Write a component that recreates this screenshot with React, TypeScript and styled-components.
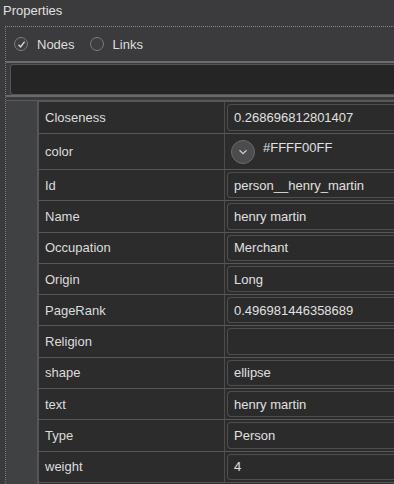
import styled, { createGlobalStyle } from 'styled-components'

const GlobalStyle = createGlobalStyle`
  html, body {
    margin: 0;
    padding: 0;
    background: #3b3b3d;
    font-family: "Liberation Sans", Arial, sans-serif;
  }
`

const Panel = styled.div`
  width: 394px;
  height: 484px;
  overflow: hidden;
  background: #3b3b3d;
  color: #dcdcdc;
  font-size: 13px;
  display: flex;
  flex-direction: column;
`

const TitleBar = styled.div`
  height: 26px;
  flex: none;
  padding-left: 3px;
  line-height: 22px;
  color: #e0e0e0;
`

const Body = styled.div`
  flex: 1;
  margin-left: 5px;
  border-top: 1px dotted #8a8a8a;
  border-left: 1px dotted #7a7a7a;
  display: flex;
  flex-direction: column;
  min-height: 0;
`

const RadioRow = styled.div`
  height: 34px;
  flex: none;
  display: flex;
  align-items: center;
  padding-left: 8px;
  gap: 9px;
`

const RadioLabel = styled.label`
  display: flex;
  align-items: center;
  gap: 9px;
  margin-right: 6px;
  color: #dedede;
`

const RadioDot = styled.span`
  width: 12px;
  height: 12px;
  border-radius: 50%;
  border: 1px solid #7c7c7c;
  background: #3e3e40;
  display: grid;
  place-content: center;
`

const FilterBar = styled.div`
  flex: none;
  border-top: 2px solid #6c6c6c;
  padding: 1px 0 0 4px;
  background: #3b3b3d;
`

const FilterInput = styled.div`
  height: 29px;
  border: 1px solid #555;
  border-right: none;
  border-radius: 3px 0 0 3px;
  background: #252525;
`

const Divider = styled.div`
  height: 3px;
  flex: none;
  border-top: 2px solid #6a6a6a;
  border-bottom: 1px solid #5a5a5a;
  background: #3b3b3d;
`

const Table = styled.div`
  flex: 1;
  display: flex;
  min-height: 0;
`

const Gutter = styled.div`
  width: 31px;
  flex: none;
  background: #404143;
  border-right: 2px solid #555657;
`

const Rows = styled.div`
  flex: 1;
  display: flex;
  flex-direction: column;
  background: #2c2c2c;
`

const Row = styled.div<{ $h: number }>`
  height: ${p => p.$h}px;
  flex: none;
  display: grid;
  grid-template-columns: 186px 1fr;
  border-top: 1px solid #575757;
  box-sizing: border-box;
`

const EndRow = styled.div`
  flex: 1;
  border-top: 1px solid #575757;
`

const NameCell = styled.div`
  display: flex;
  align-items: center;
  padding-left: 6px;
  border-right: 1px solid #4c4c4c;
  color: #dcdcdc;
`

const ValueCell = styled.div`
  padding: 2px 0 2px 2px;
  display: flex;
`

const ValueBox = styled.div`
  flex: 1;
  display: flex;
  align-items: center;
  padding-left: 6px;
  border: 1px solid #4e4e4e;
  border-right: none;
  border-radius: 4px 0 0 4px;
  background: #2b2b2b;
  color: #e0e0e0;
  white-space: nowrap;
`

const ColorValue = styled.div`
  flex: 1;
  display: flex;
  align-items: center;
  gap: 8px;
  padding-left: 4px;
`

const DropButton = styled.span`
  width: 22px;
  height: 22px;
  border-radius: 50%;
  border: 1px solid #6a6a6a;
  background: #4c4c4e;
  display: grid;
  place-content: center;
  flex: none;
`

const ColorText = styled.span`
  margin-top: -9px;
  color: #e0e0e0;
`

const props: [string, string][] = [
  ['Closeness', '0.268696812801407'],
  ['color', '#FFFF00FF'],
  ['Id', 'person__henry_martin'],
  ['Name', 'henry martin'],
  ['Occupation', 'Merchant'],
  ['Origin', 'Long'],
  ['PageRank', '0.496981446358689'],
  ['Religion', ''],
  ['shape', 'ellipse'],
  ['text', 'henry martin'],
  ['Type', 'Person'],
  ['weight', '4'],
]

const rowHeight = (i: number) => (i === 0 ? 32 : i === 1 ? 36 : 31.3)

const App = () => {
  return (
    <Panel>
      <GlobalStyle />
      <TitleBar>Properties</TitleBar>
      <Body>
        <RadioRow>
          <RadioLabel>
            <RadioDot>
              <svg width="9" height="9" viewBox="0 0 9 9">
                <path d="M1.5 4.8 L3.6 7 L7.6 1.6" fill="none" stroke="#d8d8d8" strokeWidth="1.4" />
              </svg>
            </RadioDot>
            Nodes
          </RadioLabel>
          <RadioLabel>
            <RadioDot />
            Links
          </RadioLabel>
        </RadioRow>
        <FilterBar>
          <FilterInput />
        </FilterBar>
        <Divider />
        <Table>
          <Gutter />
          <Rows>
            {props.map(([name, value], i) => (
              <Row key={name} $h={rowHeight(i)}>
                <NameCell>{name}</NameCell>
                <ValueCell>
                  {name === 'color' ? (
                    <ColorValue>
                      <DropButton>
                        <svg width="10" height="6" viewBox="0 0 10 6">
                          <path d="M1.5 1.2 L5 4.6 L8.5 1.2" fill="none" stroke="#cfcfcf" strokeWidth="1.2" />
                        </svg>
                      </DropButton>
                      <ColorText>{value}</ColorText>
                    </ColorValue>
                  ) : (
                    <ValueBox>{value}</ValueBox>
                  )}
                </ValueCell>
              </Row>
            ))}
            <EndRow />
          </Rows>
        </Table>
      </Body>
    </Panel>
  )
}

export default App
